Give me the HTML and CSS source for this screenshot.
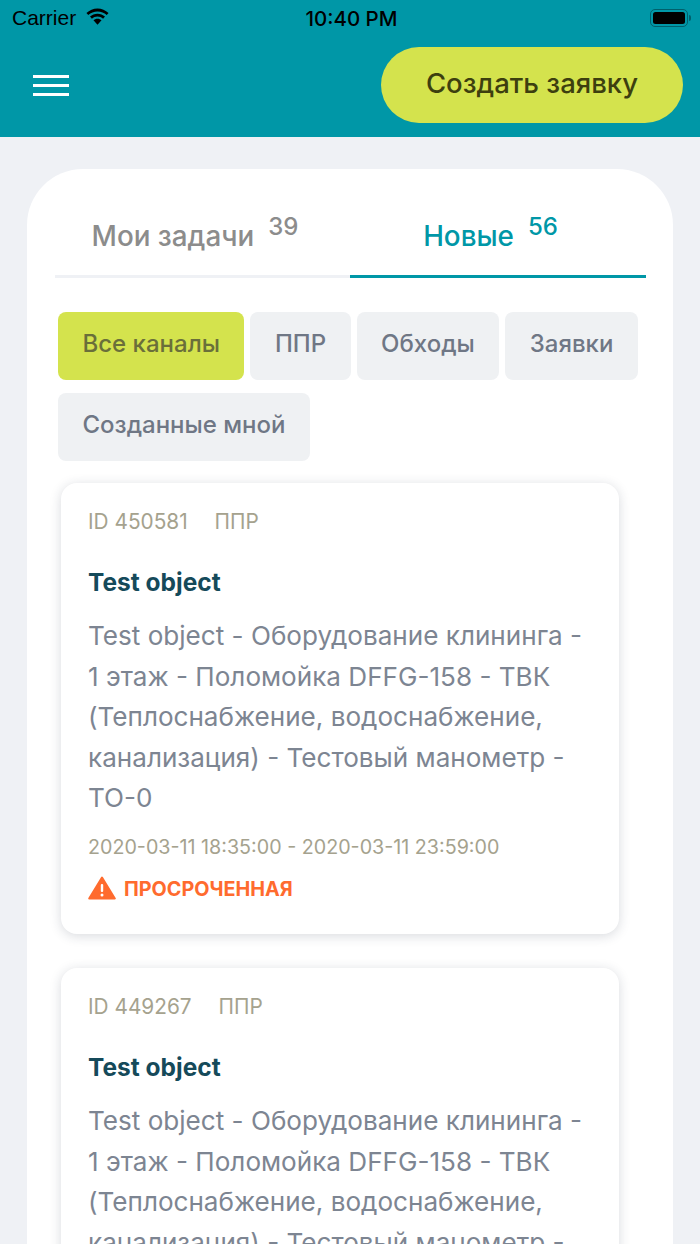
FILE: index.html
```html
<!DOCTYPE html>
<html lang="ru">
<head>
<meta charset="utf-8">
<title>Задачи</title>
<link rel="stylesheet" href="styles.css">
</head>
<body>
<div class="screen">
  <header class="header">
    <div class="status">
      <div class="status-left">
        <span class="carrier">Carrier</span>
        <svg class="wifi" width="25" height="18" viewBox="0 0 26 18"><path d="M13 3.2c3.7 0 7 1.4 9.6 3.800l1.900-2.100C21.400 2 17.400.2 13 .2S4.600 2 1.500 4.900L3.400 7C6 4.600 9.300 3.200 13 3.200z"/><path d="M13 8.500c2.200 0 4.200.8 5.800 2.200l2-2.100C18.600 6.600 16 5.500 13 5.500s-5.600 1.100-7.800 3.100l2 2.100c1.600-1.400 3.600-2.200 5.800-2.200z"/><path d="M13 10.800c-1.700 0-3.100.6-4.200 1.600l4.200 4.600 4.200-4.600c-1.100-1-2.500-1.600-4.200-1.600z"/></svg>
      </div>
      <span class="time">10:40 PM</span>
      <div class="battery-wrap">
        <div class="battery"><span class="battery-fill"></span></div>
        <span class="battery-nub"></span>
      </div>
    </div>
    <div class="toolbar">
      <button class="menu" aria-label="Меню"><span></span><span></span><span></span></button>
      <button class="create">Создать заявку</button>
    </div>
  </header>
  <main class="panel">
    <div class="tabs">
      <div class="tab"><span class="tab-label">Мои задачи</span><sup class="tab-count">39</sup></div>
      <div class="tab tab-active"><span class="tab-label">Новые</span><sup class="tab-count">56</sup></div>
    </div>
    <div class="chips">
      <span class="chip chip-active">Все каналы</span>
      <span class="chip">ППР</span>
      <span class="chip">Обходы</span>
      <span class="chip">Заявки</span>
      <span class="chip">Созданные мной</span>
    </div>
    <div class="cards">
      <article class="card">
        <div class="meta"><span>ID 450581</span><span>ППР</span></div>
        <h2 class="title">Test object</h2>
        <p class="desc">Test object - Оборудование клининга - 1 этаж - Поломойка DFFG-158 - ТВК (Теплоснабжение, водоснабжение, канализация) - Тестовый манометр - ТО-0</p>
        <div class="dates">2020-03-11 18:35:00 - 2020-03-11 23:59:00</div>
        <div class="overdue">
          <svg width="28" height="24" viewBox="0 0 28 24"><path d="M14 1.500 26.800 22.500H1.200z" fill="#ff6b2e" stroke="#ff6b2e" stroke-width="2" stroke-linejoin="round"/><rect x="12.800" y="8" width="2.400" height="8" rx="1" fill="#fff"/><circle cx="14" cy="19" r="1.500" fill="#fff"/></svg>
          <span>ПРОСРОЧЕННАЯ</span>
        </div>
      </article>
      <article class="card">
        <div class="meta"><span>ID 449267</span><span>ППР</span></div>
        <h2 class="title">Test object</h2>
        <p class="desc">Test object - Оборудование клининга - 1 этаж - Поломойка DFFG-158 - ТВК (Теплоснабжение, водоснабжение, канализация) - Тестовый манометр - ТО-0</p>
      </article>
    </div>
  </main>
</div>
</body>
</html>
```

FILE: styles.css
```css
* { box-sizing: border-box; }
html, body { margin: 0; padding: 0; }
body { font-family: "Inter", "Roboto", sans-serif; background: #eff1f5; }
.screen { width: 700px; height: 1244px; overflow: hidden; background: #eff1f5; }
.header { height: 137px; background: #0097a7; display: flex; flex-direction: column; }
.status { height: 36px; padding: 0 9px 0 12px; display: grid; grid-template-columns: 1fr auto 1fr; align-items: center; color: #000; }
.status-left { display: flex; align-items: center; gap: 9px; }
.carrier { font-family: "Liberation Sans", sans-serif; font-size: 21px; }
.wifi { display: block; margin-top: -2px; }
.time { font-size: 20.500px; font-weight: 500; }
.battery-wrap { display: flex; align-items: center; justify-content: flex-end; gap: 1px; }
.battery { width: 38px; height: 18px; border: 1.500px solid #00606c; border-radius: 5px; padding: 2px; }
.battery-fill { display: block; height: 100%; background: #000; border-radius: 2.500px; }
.battery-nub { width: 2px; height: 6px; background: #00606c; border-radius: 0 2px 2px 0; }
.toolbar { display: flex; align-items: center; justify-content: space-between; padding: 11px 17px 0 33px; }
.menu { width: 36px; height: 21px; padding: 0; border: 0; background: none; display: flex; flex-direction: column; justify-content: space-between; }
.menu span { display: block; height: 3px; background: #fff; }
.create { width: 302px; height: 76px; padding: 0 0 5px; border: 0; border-radius: 38px; background: #d4e34d; color: #3d3f0f; font: 500 27.500px "Inter", sans-serif; }
.panel { margin: 32px 27px 0; background: #fff; border-radius: 56px 56px 0 0; padding: 0 27px 0 28px; }
.tabs { display: flex; height: 109px; }
.tab { flex: 0 0 295px; display: flex; justify-content: center; align-items: flex-start; padding: 50px 15px 0 0; border-bottom: 3px solid #eff1f5; color: #8c8c8c; font-weight: 500; }
.tab-active { flex: 0 0 296px; color: #0097a7; border-bottom-color: #0097a7; }
.tab-label { font-size: 27.800px; line-height: 34px; }
.tab-count { font-size: 24px; line-height: 28px; margin: -6px 0 0 14px; vertical-align: baseline; }
.chips { display: flex; flex-wrap: wrap; gap: 13px 6px; padding: 34px 0 0 3px; }
.chip { height: 68px; padding: 0 24.500px 5px; display: flex; align-items: center; background: #eff1f3; border-radius: 8px; color: #6f7785; font-size: 24px; font-weight: 500; }
.chip-active { background: #d4e34d; color: #6a6f3a; }
.cards { padding: 22px 27px 0 6px; display: flex; flex-direction: column; gap: 34px; }
.card { background: #fff; border-radius: 16px; box-shadow: 0 2px 12px rgba(40, 50, 70, .18); padding: 26px 27px 0; min-height: 451px; }
.meta { display: flex; gap: 27px; color: #a5a28e; font-size: 20.800px; line-height: 26px; }
.title { margin: 31px 0 0; color: #154a5a; font-size: 24.500px; line-height: 32px; font-weight: 700; }
.desc { margin: 18px 0 0; color: #7d8592; font-size: 26.100px; line-height: 40.500px; }
.dates { margin-top: 15px; color: #a5a28e; font-size: 19.700px; line-height: 26px; }
.overdue { margin-top: 17px; display: flex; align-items: center; gap: 8px; color: #ff6b2e; font-size: 19.800px; font-weight: 700; }
.overdue svg { display: block; margin-top: -2px; }
```
